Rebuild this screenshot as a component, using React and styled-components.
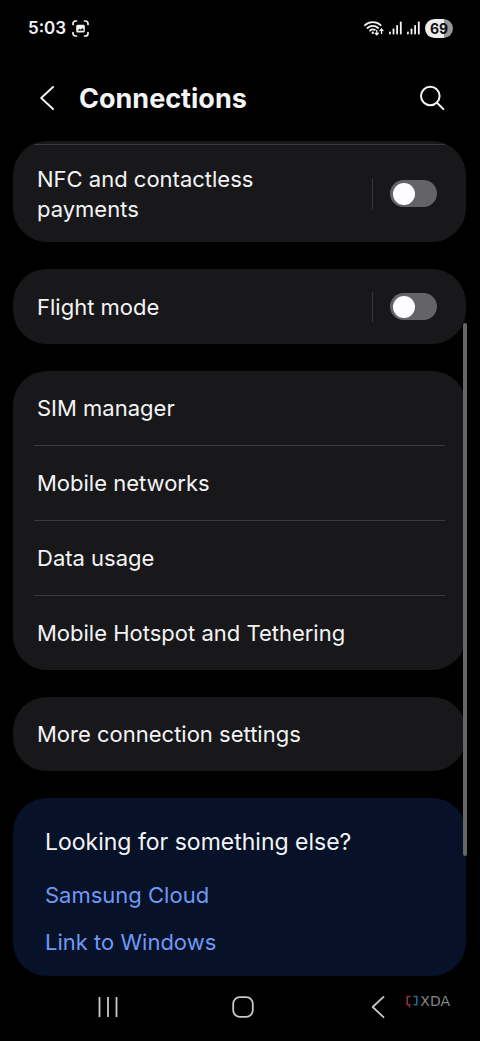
import React, { useState } from 'react';
import styled, { createGlobalStyle } from 'styled-components';

const GlobalStyle = createGlobalStyle`
    * {
        box-sizing: border-box;
    }
    body {
        margin: 0;
        background: #000;
        color: #f4f4f6;
        font-family: Inter, "Noto Sans", sans-serif;
    }
    button {
        padding: 0;
        border: 0;
        background: none;
        color: inherit;
        font: inherit;
        cursor: pointer;
    }
    a {
        color: inherit;
        text-decoration: none;
    }
    svg {
        display: block;
        flex-shrink: 0;
    }
`
const Screen = styled.div`
    display: flex;
    flex-direction: column;
    min-height: 100vh;
`
const StatusBar = styled.div`
    display: flex;
    align-items: center;
    justify-content: space-between;
    height: 56px;
    padding: 0 27px 0 28px;
    .side {
        display: flex;
        align-items: center;
        gap: 5px;
    }
`
const Time = styled.span`
    margin-right: 1px;
    font-size: 17px;
    font-weight: 600;
`
const Battery = styled.span`
    width: 28px;
    border-radius: 10px;
    background: linear-gradient(to right, #ededed 69%, #98989a 69%);
    color: #111;
    font-size: 14px;
    font-weight: 700;
    line-height: 19px;
    text-align: center;
`
const IconButton = styled.button`
    display: flex;
    align-items: center;
    justify-content: center;
    width: 24px;
    height: 32px;
`
const Header = styled.header`
    display: flex;
    align-items: center;
    height: 85px;
    padding: 0 36px 0 35px;
    ${IconButton} {
        padding-bottom: 2px;
    }
`
const Title = styled.h1`
    flex: 1;
    margin: 0 0 0 20px;
    font-size: 27px;
    font-weight: 700;
    line-height: 32px;
`
const List = styled.main`
    position: relative;
    display: flex;
    flex-direction: column;
    gap: 27px;
    padding: 0 14px 0 13px;
`
const Card = styled.section`
    padding: ${props => props.$cut ? '3px' : '0'} 21px 0;
    border-radius: 34px;
    background: #18181a;
    overflow: hidden;
`
const Row = styled.div`
    display: flex;
    align-items: center;
    justify-content: space-between;
    min-height: ${props => props.$tall ? '98px' : '75px'};
    padding: 0 8px 0 3px;
    border-top: ${props => props.$line ? '1px solid #3a3a3c' : '0'};
    font-size: 22px;
    line-height: 30px;
`
const RowLink = styled(Row).attrs({ as: 'a', href: '#' })`
    min-height: ${props => props.$line ? '75px' : '74px'};
`
const RowLabel = styled.label`
    max-width: 260px;
`
const SwitchArea = styled.div`
    display: flex;
    align-items: center;
    gap: 17px;
    &::before {
        content: "";
        width: 1px;
        height: 30px;
        background: #38383a;
    }
`
const Switch = styled.input.attrs({ type: 'checkbox', role: 'switch' })`
    display: flex;
    align-items: center;
    appearance: none;
    width: 47px;
    height: 27px;
    margin: 0;
    padding: 0 3px;
    border-radius: 14px;
    background: #646468;
    cursor: pointer;
    &::before {
        content: "";
        width: 22px;
        height: 22px;
        border-radius: 50%;
        background: #fdfdff;
    }
    &:checked {
        justify-content: flex-end;
        background: #3e82f7;
    }
`
const Suggest = styled.section`
    display: flex;
    flex-direction: column;
    align-items: flex-start;
    padding: 29px 32px 19px;
    border-radius: 34px;
    background: #071127;
    h2 {
        margin: 0 0 23px;
        font-size: 23px;
        font-weight: 400;
        line-height: 30px;
    }
    a {
        color: #6f99f5;
        font-size: 22px;
        line-height: 30px;
    }
    a + a {
        margin-top: 17px;
    }
`
const ScrollThumb = styled.div`
    position: absolute;
    top: 182px;
    right: 13px;
    bottom: 120px;
    width: 4px;
    border-radius: 2px;
    background: #666;
`
const NavBar = styled.nav`
    position: relative;
    display: grid;
    grid-template-columns: repeat(3, 1fr);
    justify-items: center;
    height: 65px;
    padding: 15px 35px 0 41px;
    color: #c8c8c8;
`
const Brand = styled.div`
    position: absolute;
    top: 17px;
    right: 30px;
    display: flex;
    align-items: center;
    gap: 2px;
    color: #858585;
    font-family: "DejaVu Sans", sans-serif;
    font-size: 14px;
    line-height: 16px;
`

const CaptureIcon = () => (
    <svg width="17" height="17" viewBox="0 0 17 17" fill="none" stroke="#f4f4f6" strokeWidth="1.7" strokeLinecap="round">
        <path d="M1 4.5V3.5A2.5 2.5 0 0 1 3.5 1h1M12.5 1h1A2.5 2.5 0 0 1 16 3.5v1M16 12.5v1a2.5 2.5 0 0 1-2.5 2.5h-1M4.5 16h-1A2.5 2.5 0 0 1 1 13.5v-1" />
        <rect x="4.2" y="4.8" width="8.6" height="7.6" rx="1.5" fill="#f4f4f6" stroke="none" />
        <path d="M5.6 10.8l2-2 1.2.9 1.4-1.7 1.3 1.3v1.5z" fill="#111" stroke="none" />
    </svg>
)

const WifiIcon = () => (
    <svg width="20" height="16" viewBox="0 0 20 16" fill="none" stroke="#f4f4f6" strokeWidth="1.8" strokeLinecap="round">
        <path d="M1 5.2a11.5 11.5 0 0 1 15.6 0M3.5 8a7.8 7.8 0 0 1 10.6 0M6 10.6a4.4 4.4 0 0 1 4.8-.7" />
        <circle cx="8.8" cy="12.8" r="1.2" fill="#f4f4f6" stroke="none" />
        <path d="M12.8 10.4v4.4M11.3 13.3l1.5 1.6 1.5-1.6M17.5 13.5V9.2M16 10.6l1.5-1.6 1.5 1.6" strokeWidth="1.3" />
    </svg>
)

const SignalIcon = () => (
    <svg width="13" height="14" viewBox="0 0 13 14" fill="#f4f4f6">
        <rect x="0" y="10.5" width="1.8" height="3" rx=".8" />
        <rect x="3.6" y="7.5" width="1.8" height="6" rx=".8" />
        <rect x="7.2" y="4" width="1.8" height="9.5" rx=".8" />
        <rect x="10.9" y=".5" width="1.8" height="13" rx=".8" />
    </svg>
)

const BackIcon = ({ size = 24 }) => (
    <svg width={size} height={size} viewBox="0 0 24 24" fill="none" stroke="currentColor" strokeWidth="1.9" strokeLinecap="round" strokeLinejoin="round">
        <path d="M18 1L6.2 12 18 23" />
    </svg>
)

const SearchIcon = () => (
    <svg width="26" height="26" viewBox="0 0 26 26" fill="none" stroke="currentColor" strokeWidth="2" strokeLinecap="round">
        <circle cx="11.3" cy="11" r="9.3" />
        <path d="M18 17.7l6.4 6.4" />
    </svg>
)

const SwitchRow = ({ id, label, tall, line }) => {
    const [on, setOn] = useState(false);
    return (
        <Row $tall={tall} $line={line}>
            <RowLabel htmlFor={id}>{label}</RowLabel>
            <SwitchArea>
                <Switch id={id} checked={on} onChange={() => setOn(!on)} />
            </SwitchArea>
        </Row>
    );
};

const simItems = ['SIM manager', 'Mobile networks', 'Data usage', 'Mobile Hotspot and Tethering'];

const App = () => {
    return (
        <>
        <GlobalStyle />
        <Screen>
            <StatusBar>
                <div className="side">
                    <Time>5:03</Time>
                    <CaptureIcon />
                </div>
                <div className="side">
                    <WifiIcon />
                    <SignalIcon />
                    <SignalIcon />
                    <Battery>69</Battery>
                </div>
            </StatusBar>
            <Header>
                <IconButton aria-label="Back"><BackIcon /></IconButton>
                <Title>Connections</Title>
                <IconButton aria-label="Search"><SearchIcon /></IconButton>
            </Header>
            <List>
                <Card $cut>
                    <SwitchRow id="nfc" label="NFC and contactless payments" tall line />
                </Card>
                <Card>
                    <SwitchRow id="flight" label="Flight mode" />
                </Card>
                <Card>
                    {simItems.map((item, i) => (
                        <RowLink key={item} $line={i > 0}>{item}</RowLink>
                    ))}
                </Card>
                <Card>
                    <RowLink>More connection settings</RowLink>
                </Card>
                <Suggest>
                    <h2>Looking for something else?</h2>
                    <a href="#">Samsung Cloud</a>
                    <a href="#">Link to Windows</a>
                </Suggest>
                <ScrollThumb />
            </List>
            <NavBar>
                <IconButton aria-label="Recent apps">
                    <svg width="20" height="22" viewBox="0 0 20 22" stroke="currentColor" strokeWidth="1.8">
                        <path d="M1.5 1v20M10 1v20M18.5 1v20" />
                    </svg>
                </IconButton>
                <IconButton aria-label="Home">
                    <svg width="22" height="22" viewBox="0 0 22 22" fill="none" stroke="currentColor" strokeWidth="1.8">
                        <rect x="1.2" y="1.2" width="19.6" height="19.6" rx="6.5" />
                    </svg>
                </IconButton>
                <IconButton aria-label="Go back"><BackIcon size={22} /></IconButton>
                <Brand>
                    <svg width="12" height="13" viewBox="0 0 12 13" fill="none" strokeWidth="1.6">
                        <path d="M4.5 1.5H1.2v8.3h2.3v2.6" stroke="#8c2f3c" />
                        <path d="M7.5 1.5h3.3v8.3H7.5" stroke="#25658c" />
                    </svg>
                    XDA
                </Brand>
            </NavBar>
        </Screen>
        </>
    );
};

export default App;
